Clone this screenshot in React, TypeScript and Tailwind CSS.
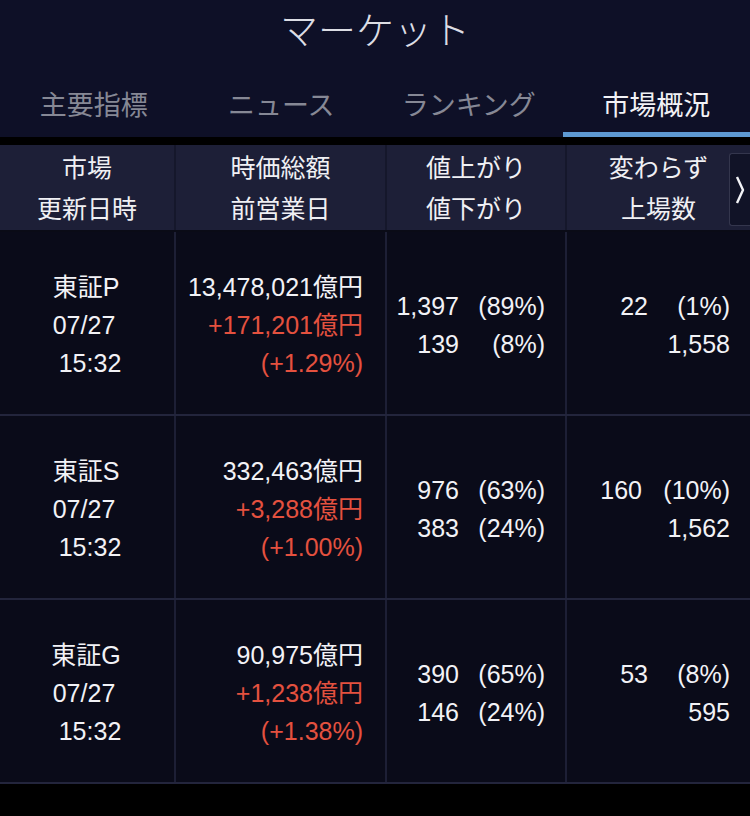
import React from "react";

const rows = [
  {
    name: "東証P",
    cap: "13,478,021億円",
    diff: "+171,201億円",
    pct: "(+1.29%)",
    up: "1,397",
    upPct: "(89%)",
    down: "139",
    downPct: "(8%)",
    flat: "22",
    flatPct: "(1%)",
    flatW: "w-[82px]",
    listed: "1,558",
  },
  {
    name: "東証S",
    cap: "332,463億円",
    diff: "+3,288億円",
    pct: "(+1.00%)",
    up: "976",
    upPct: "(63%)",
    down: "383",
    downPct: "(24%)",
    flat: "160",
    flatPct: "(10%)",
    flatW: "w-[88px]",
    listed: "1,562",
  },
  {
    name: "東証G",
    cap: "90,975億円",
    diff: "+1,238億円",
    pct: "(+1.38%)",
    up: "390",
    upPct: "(65%)",
    down: "146",
    downPct: "(24%)",
    flat: "53",
    flatPct: "(8%)",
    flatW: "w-[82px]",
    listed: "595",
  },
];

const tabs = ["主要指標", "ニュース", "ランキング", "市場概況"];

export default function App() {
  return (
    <div
      className="w-[750px] h-[816px] bg-black overflow-hidden"
      style={{ fontFamily: '"Liberation Sans", "Noto Sans CJK JP", sans-serif' }}
    >
      {/* Top bar */}
      <div className="bg-[#0e1027]">
        <div className="h-[62px] flex items-center justify-center text-[38px] font-light text-[#dcdde4] pt-[1px]">
          マーケット
        </div>
        <div className="flex h-[75px]">
          {tabs.map((t, i) => {
            const active = i === 3;
            return (
              <div
                key={t}
                className={`flex-1 flex items-center justify-center text-[27px] pt-[19px] ${
                  active
                    ? "text-[#f2f2f6] border-b-[5px] border-[#5e9ad3]"
                    : "text-[#868895] border-b-[5px] border-transparent"
                }`}
              >
                {t}
              </div>
            );
          })}
        </div>
      </div>
      <div className="h-[8px] bg-black" />

      {/* Table header */}
      <div className="relative grid grid-cols-[174px_211px_180px_185px] h-[87px] bg-[#1d1f37] text-[25px] leading-[41px] text-[#f0f0f4] border-b-[2px] border-[#0a0b16]">
        <div className="flex flex-col items-center justify-center pt-[2px]">
          <span>市場</span>
          <span>更新日時</span>
        </div>
        <div className="flex flex-col items-center justify-center pt-[2px] border-l-[2px] border-[#15172b]">
          <span>時価総額</span>
          <span>前営業日</span>
        </div>
        <div className="flex flex-col items-center justify-center pt-[2px] border-l-[2px] border-[#15172b]">
          <span>値上がり</span>
          <span>値下がり</span>
        </div>
        <div className="flex flex-col items-center justify-center pt-[2px] border-l-[2px] border-[#15172b]">
          <span>変わらず</span>
          <span>上場数</span>
        </div>
        <div className="absolute right-0 top-[8px] w-[21px] h-[73px] bg-[#111327] border border-r-0 border-[#34364d] rounded-l-[3px] flex items-center justify-center">
          <svg width="10" height="30" viewBox="0 0 10 30" fill="none">
            <polyline points="2,2 8,15 2,28" stroke="#f2f2f6" strokeWidth="2.4" strokeLinejoin="round" />
          </svg>
        </div>
      </div>

      {/* Rows */}
      {rows.map((r) => (
        <div
          key={r.name}
          className="grid grid-cols-[174px_211px_180px_185px] h-[184px] bg-[#0a0b19] border-b-[2px] border-[#23253c] text-[25px] leading-[38px] text-[#f2f2f6]"
        >
          <div className="flex flex-col items-center justify-center pt-[4px]">
            <span className="pr-[2px]">{r.name}</span>
            <span className="pr-[6px]">07/27</span>
            <span className="pl-[6px]">15:32</span>
          </div>
          <div className="flex flex-col items-end justify-center pr-[22px] pt-[4px] border-l-[2px] border-[#1d1f35]">
            <span>{r.cap}</span>
            <span className="text-[#e4513f]">{r.diff}</span>
            <span className="text-[#e4513f]">{r.pct}</span>
          </div>
          <div className="flex flex-col justify-center pr-[20px] pt-[4px] border-l-[2px] border-[#1d1f35]">
            <div className="flex justify-end">
              <span className="text-right">{r.up}</span>
              <span className="w-[86px] text-right">{r.upPct}</span>
            </div>
            <div className="flex justify-end">
              <span className="text-right">{r.down}</span>
              <span className="w-[86px] text-right">{r.downPct}</span>
            </div>
          </div>
          <div className="flex flex-col justify-center pr-[20px] pt-[4px] border-l-[2px] border-[#1d1f35]">
            <div className="flex justify-end">
              <span className="text-right">{r.flat}</span>
              <span className={`${r.flatW} text-right`}>{r.flatPct}</span>
            </div>
            <div className="flex justify-end">
              <span>{r.listed}</span>
            </div>
          </div>
        </div>
      ))}
    </div>
  );
}
